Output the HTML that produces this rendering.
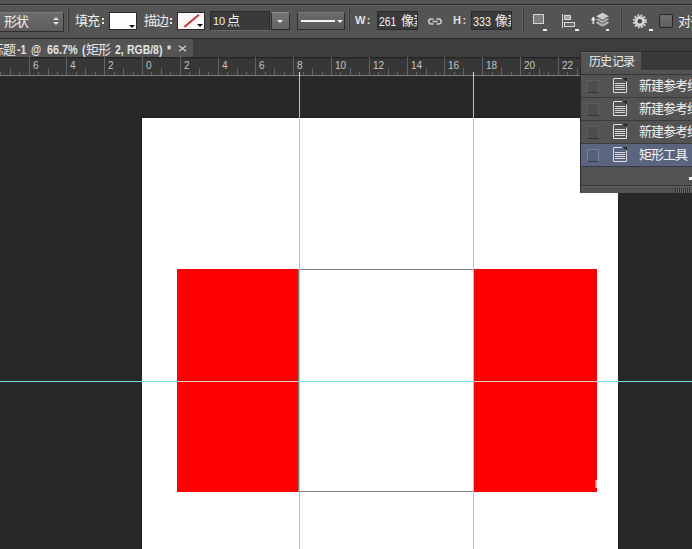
<!DOCTYPE html>
<html lang="zh-CN">
<head>
<meta charset="utf-8">
<style>
*{margin:0;padding:0;box-sizing:border-box}
html,body{width:692px;height:549px;overflow:hidden;background:#282828;font-family:"Liberation Sans",sans-serif;position:relative}
.a{position:absolute}
i,b{position:absolute;display:block;font-style:normal}
#ob{left:0;top:0;width:692px;height:39px;background:#545454}
.sep{position:absolute;top:8px;width:1px;height:25px;background:#383838}
.sepl{position:absolute;top:8px;width:1px;height:25px;background:#626262}
.t{position:absolute;color:#f0f0f0;font-size:13px;line-height:13px;white-space:nowrap;font-weight:normal}
.cj{letter-spacing:-1px}
.tri{position:absolute;width:0;height:0;border-left:3px solid transparent;border-right:3px solid transparent;border-top:3px solid #111}
#tb{left:0;top:39px;width:692px;height:18px;background:#3d3d3d}
#tab{left:0;top:39px;width:193px;height:18px;background:#545454}
.tt{position:absolute;top:44px;font-size:12px;line-height:13px;font-weight:bold;color:#e4e4e4;white-space:nowrap;transform:scaleX(0.87);transform-origin:0 0}
.cjt{font-weight:normal;transform:none;letter-spacing:-1px;font-size:13px;top:43px}
#ru{left:0;top:57px;width:692px;height:19px;background:#373737}
.tk{width:1px;background:#626262}
.tm{top:11px;height:7px}
.ts{top:15px;height:3px}
.rl{top:4px;font-size:10px;line-height:10px;color:#c4c4c4;font-weight:normal}
#doc{left:142px;top:118px;width:476px;height:431px;background:#fff;box-shadow:0 0 0 1px #222,0 0 0 2px #252525}
.red{background:#fe0000}
.gv{width:1px;background:#74e2d8}
.gh{height:1px;background:#74e2d8}
#hp{left:580px;top:51px;width:112px;height:142px;background:#535353;border-left:1px solid #2c2c2c;border-top:1px solid #2c2c2c}
.row{position:absolute;left:0;width:112px;height:23px;border-bottom:1px solid #3b3b3b}
.cb{position:absolute;left:6px;top:5px;width:12px;height:13px;background:#4d4d4d;border:1px solid #5c5c5c;border-bottom-color:#333}
.di{position:absolute;left:31px;top:3px;width:16px;height:16px}
.rt{position:absolute;left:58px;top:4px;font-size:13px;line-height:13px;color:#f4f4f4;white-space:nowrap;letter-spacing:-1px}
</style>
</head>
<body>
<!-- options bar -->
<div id="ob" class="a">
  <i style="left:0;top:4px;width:692px;height:1px;background:#2c2c2c"></i>
  <i style="left:0;top:5px;width:692px;height:1px;background:#646464"></i>
  <i style="left:0;top:38px;width:692px;height:1px;background:#2a2a2a"></i>
  <!-- shape dropdown -->
  <i style="left:-2px;top:12px;width:66px;height:20px;background:linear-gradient(#6c6c6c,#5c5c5c);border:1px solid #2e2e2e;border-top-color:#7c7c7c"></i>
  <b class="t cj" style="left:4px;top:15px">形状</b>
  <i style="left:53px;top:17px;border-left:3.5px solid transparent;border-right:3.5px solid transparent;border-bottom:3px solid #ddd"></i>
  <i style="left:53px;top:22px;border-left:3.5px solid transparent;border-right:3.5px solid transparent;border-top:3px solid #ddd"></i>
  <i class="sepl" style="left:67px"></i><i class="sep" style="left:68px"></i>
  <b class="t cj" style="left:75px;top:14px">填充</b><i style="left:102px;top:18px;width:2px;height:2px;background:#e8e8e8"></i><i style="left:102px;top:22px;width:2px;height:2px;background:#e8e8e8"></i>
  <i style="left:109px;top:12px;width:28px;height:18px;background:#fff;border:1px solid #2a2a2a"></i>
  <i class="tri" style="left:129px;top:25px"></i>
  <b class="t cj" style="left:144px;top:14px">描边</b><i style="left:170px;top:18px;width:2px;height:2px;background:#e8e8e8"></i><i style="left:170px;top:22px;width:2px;height:2px;background:#e8e8e8"></i>
  <i style="left:177px;top:12px;width:28px;height:18px;background:#fdf6f6;border:1px solid #2a2a2a;overflow:hidden">
    <i style="left:4px;top:7px;width:19px;height:1.6px;background:#c03a3a;transform:rotate(-40deg)"></i>
  </i>
  <i class="tri" style="left:197px;top:24px"></i>
  <i style="left:210px;top:11px;width:60px;height:20px;background:#3a3a3a;border:1px solid #2a2a2a;border-bottom-color:#666"></i>
  <b class="t" style="left:213px;top:16px;font-size:11px;line-height:11px">10</b><b class="t" style="left:227px;top:14px">点</b>
  <i style="left:271px;top:12px;width:19px;height:18px;background:linear-gradient(#767676,#636363);border:1px solid #2e2e2e;border-top-color:#8a8a8a"></i>
  <i style="left:277px;top:20px;border-left:3.5px solid transparent;border-right:3.5px solid transparent;border-top:3px solid #f0f0f0"></i>
  <i style="left:297px;top:12px;width:48px;height:18px;background:linear-gradient(#6a6a6a,#5a5a5a);border:1px solid #2e2e2e;border-top-color:#777"></i>
  <i style="left:301px;top:20px;width:34px;height:2px;background:#f4f4f4"></i>
  <i style="left:337px;top:20px;border-left:3px solid transparent;border-right:3px solid transparent;border-top:3px solid #eee"></i>
  <i class="sepl" style="left:348px"></i><i class="sep" style="left:349px"></i>
  <b class="t" style="left:355px;top:15px;font-size:11px;line-height:10px;font-weight:bold;color:#e0e0e0;letter-spacing:1.5px">W:</b>
  <i style="left:377px;top:11px;width:41px;height:19px;background:#3a3a3a;border:1px solid #2c2c2c;overflow:hidden"><b class="t" style="left:1px;top:4px;font-size:12px;line-height:12px;transform:scaleX(0.86);transform-origin:0 0">261</b><b class="t cj" style="left:23px;top:2px">像素</b></i>
  <svg class="a" style="left:428px;top:18px" width="14" height="7" viewBox="0 0 14 7"><path d="M5.5 1 H3.2 A2.5 2.5 0 0 0 3.2 6 H5.5 M8.5 1 H10.8 A2.5 2.5 0 0 1 10.8 6 H8.5 M4.5 3.5 H9.5" fill="none" stroke="#cfcfcf" stroke-width="1.5"/></svg>
  <b class="t" style="left:453px;top:15px;font-size:11px;line-height:10px;font-weight:bold;color:#e0e0e0;letter-spacing:1.5px">H:</b>
  <i style="left:471px;top:11px;width:41px;height:19px;background:#3a3a3a;border:1px solid #2c2c2c;overflow:hidden"><b class="t" style="left:1px;top:4px;font-size:12px;line-height:12px;transform:scaleX(0.9);transform-origin:0 0">333</b><b class="t cj" style="left:23px;top:2px">像素</b></i>
  <i class="sepl" style="left:522px"></i><i class="sep" style="left:523px"></i>
  <!-- icons -->
  <i style="left:533px;top:14px;width:11px;height:10px;background:#7e7e7e;border:1px solid #d4d4d4"></i>
  <i style="left:543px;top:29px;width:4px;height:2px;background:#eee"></i>
  <i style="left:562px;top:14px;width:1px;height:14px;background:#dadada"></i>
  <i style="left:564px;top:15px;width:7px;height:5px;background:#a0a0a0;border:1px solid #dadada"></i>
  <i style="left:564px;top:22px;width:11px;height:5px;background:#666;border:1px solid #dadada"></i>
  <i style="left:575px;top:29px;width:4px;height:2px;background:#eee"></i>
  <svg class="a" style="left:589px;top:9px" width="24" height="23" viewBox="0 0 24 23">
    <path d="M4.3 8 V15" stroke="#e0e0e0" stroke-width="1.6" fill="none"/><path d="M1.8 11.2 L4.3 7.6 L6.8 11.2 Z" fill="#e8e8e8"/>
    <path d="M7.5 13.7 L13.5 10.2 L19.5 13.7 L13.5 17.2 Z" fill="#a0a0a0" stroke="#d0d0d0" stroke-width="0.9"/>
    <path d="M7.5 10.7 L13.5 7.2 L19.5 10.7 L13.5 14.2 Z" fill="#b4b4b4" stroke="#d8d8d8" stroke-width="0.9"/>
    <path d="M7.5 10.9 L13.5 14.4 L19.5 10.9" fill="none" stroke="#3a3a3a" stroke-width="0.8"/>
    <path d="M7.5 7.7 L13.5 4.2 L19.5 7.7 L13.5 11.2 Z" fill="#cacaca" stroke="#e4e4e4" stroke-width="0.9"/>
    <path d="M7.5 7.9 L13.5 11.4 L19.5 7.9" fill="none" stroke="#333" stroke-width="0.9"/>
    <rect x="17" y="20" width="3" height="2" fill="#f0f0f0"/>
  </svg>
  <i class="sepl" style="left:620px"></i><i class="sep" style="left:621px"></i>
  <svg class="a" style="left:632px;top:13px" width="16" height="16" viewBox="0 0 16 16">
    <circle cx="7.8" cy="8.2" r="6" fill="none" stroke="#d4d4d4" stroke-width="2.2" stroke-dasharray="1.75 1.4"/>
    <circle cx="7.8" cy="8.2" r="5.2" fill="#d4d4d4"/>
    <circle cx="7.8" cy="8.2" r="2.2" fill="#454545"/>
  </svg>
  <i style="left:649px;top:29px;width:4px;height:2px;background:#eee"></i>
  <i style="left:659px;top:14px;width:14px;height:14px;background:linear-gradient(#707070,#5e5e5e);border:1px solid #262626;border-radius:2px"></i>
  <b class="t cj" style="left:678px;top:15px">对齐边缘</b>
</div>
<!-- tab bar -->
<div id="tb" class="a"></div>
<div id="tab" class="a"></div>
<b class="tt cjt" style="left:-9px">标题</b>
<b class="tt" style="left:17px">-1</b>
<b class="tt" style="left:31px">@</b>
<b class="tt" style="left:47px;transform:scaleX(0.9)">66.7%</b>
<b class="tt" style="left:82px">(</b>
<b class="tt cjt" style="left:86px">矩形</b>
<b class="tt" style="left:115px">2,</b>
<b class="tt" style="left:127px">RGB/8)</b>
<b class="tt" style="left:167px">*</b>
<svg class="a" style="left:178px;top:45px" width="9" height="7" viewBox="0 0 9 7"><path d="M1 0.8 L8 6.2 M1 6.2 L8 0.8" stroke="#d4d4d4" stroke-width="1.2"/></svg>
<!-- ruler -->
<div id="ru" class="a">
<i style="left:0;top:0;width:692px;height:1px;background:#262626"></i><i style="left:0;top:1px;width:692px;height:1px;background:#2e2e2e"></i>
<i style="left:0;top:18px;width:692px;height:1px;background:#7c7c7c"></i>
<i class="tk ts" style="left:0px"></i><i class="tk tm" style="left:10px"></i><i class="tk ts" style="left:19px"></i><i class="tk" style="left:29px;top:0;height:18px"></i><i class="tk ts" style="left:38px"></i><i class="tk tm" style="left:48px"></i><i class="tk ts" style="left:57px"></i><i class="tk" style="left:66px;top:0;height:18px"></i><i class="tk ts" style="left:76px"></i><i class="tk tm" style="left:85px"></i><i class="tk ts" style="left:95px"></i><i class="tk" style="left:104px;top:0;height:18px"></i><i class="tk ts" style="left:114px"></i><i class="tk tm" style="left:123px"></i><i class="tk ts" style="left:133px"></i><i class="tk" style="left:142px;top:0;height:18px"></i><i class="tk ts" style="left:151px"></i><i class="tk tm" style="left:161px"></i><i class="tk ts" style="left:170px"></i><i class="tk" style="left:180px;top:0;height:18px"></i><i class="tk ts" style="left:189px"></i><i class="tk tm" style="left:199px"></i><i class="tk ts" style="left:208px"></i><i class="tk" style="left:218px;top:0;height:18px"></i><i class="tk ts" style="left:227px"></i><i class="tk tm" style="left:237px"></i><i class="tk ts" style="left:246px"></i><i class="tk" style="left:255px;top:0;height:18px"></i><i class="tk ts" style="left:265px"></i><i class="tk tm" style="left:274px"></i><i class="tk ts" style="left:284px"></i><i class="tk" style="left:293px;top:0;height:18px"></i><i class="tk ts" style="left:303px"></i><i class="tk tm" style="left:312px"></i><i class="tk ts" style="left:322px"></i><i class="tk" style="left:331px;top:0;height:18px"></i><i class="tk ts" style="left:340px"></i><i class="tk tm" style="left:350px"></i><i class="tk ts" style="left:359px"></i><i class="tk" style="left:369px;top:0;height:18px"></i><i class="tk ts" style="left:378px"></i><i class="tk tm" style="left:388px"></i><i class="tk ts" style="left:397px"></i><i class="tk" style="left:407px;top:0;height:18px"></i><i class="tk ts" style="left:416px"></i><i class="tk tm" style="left:426px"></i><i class="tk ts" style="left:435px"></i><i class="tk" style="left:444px;top:0;height:18px"></i><i class="tk ts" style="left:454px"></i><i class="tk tm" style="left:463px"></i><i class="tk ts" style="left:473px"></i><i class="tk" style="left:482px;top:0;height:18px"></i><i class="tk ts" style="left:492px"></i><i class="tk tm" style="left:501px"></i><i class="tk ts" style="left:511px"></i><i class="tk" style="left:520px;top:0;height:18px"></i><i class="tk ts" style="left:529px"></i><i class="tk tm" style="left:539px"></i><i class="tk ts" style="left:548px"></i><i class="tk" style="left:558px;top:0;height:18px"></i><i class="tk ts" style="left:567px"></i><i class="tk tm" style="left:577px"></i>
<b class="rl" style="left:33px">6</b><b class="rl" style="left:70px">4</b><b class="rl" style="left:108px">2</b><b class="rl" style="left:146px">0</b><b class="rl" style="left:184px">2</b><b class="rl" style="left:222px">4</b><b class="rl" style="left:259px">6</b><b class="rl" style="left:297px">8</b><b class="rl" style="left:335px">10</b><b class="rl" style="left:373px">12</b><b class="rl" style="left:411px">14</b><b class="rl" style="left:448px">16</b><b class="rl" style="left:486px">18</b><b class="rl" style="left:524px">20</b><b class="rl" style="left:562px">22</b>

<i style="left:299px;top:15px;width:1px;height:4px;background:#9ff"></i>
<i style="left:473px;top:15px;width:1px;height:4px;background:#9ff"></i>
</div>
<!-- canvas -->
<div id="doc" class="a"></div>
<div class="a red" style="left:177px;top:269px;width:121px;height:223px"></div>
<div class="a red" style="left:473px;top:269px;width:124px;height:223px"></div>
<div class="a" style="left:298px;top:269px;width:176px;height:223px;border:1px solid #7e7e7e"></div>
<div class="a" style="left:595px;top:480px;width:1px;height:8px;background:#ff7070"></div><div class="a" style="left:596px;top:480px;width:1px;height:8px;background:#ffc0c0"></div>
<div class="a gv" style="left:299px;top:76px;height:473px"></div>
<div class="a gv" style="left:473px;top:76px;height:473px"></div>
<div class="a gh" style="left:0;top:381px;width:692px"></div>
<div class="a" style="left:177px;top:380px;width:121px;height:1px;background:#c01414"></div>
<div class="a" style="left:177px;top:381px;width:121px;height:1px;background:#f6c2ba"></div>
<div class="a" style="left:474px;top:380px;width:123px;height:1px;background:#c01414"></div>
<div class="a" style="left:474px;top:381px;width:123px;height:1px;background:#f6c2ba"></div>
<!-- history panel -->
<div id="hp" class="a">
  <i style="left:0;top:0;width:112px;height:19px;background:#3a3a3a"></i>
  <i style="left:0;top:0;width:60px;height:19px;background:#545454;border-top:1px solid #626262"></i>
  <b style="left:8px;top:4px;font-size:12px;line-height:12px;color:#eeeeee;white-space:nowrap;font-weight:normal;letter-spacing:-0.7px">历史记录</b>
  <i style="left:60px;top:18px;width:52px;height:1px;background:#5a5a5a"></i>
  <i style="left:0;top:22px;width:112px;height:1px;background:#353535"></i>
  <div class="row" style="top:23px"><i class="cb"></i><svg class="di" width="16" height="16" viewBox="0 0 16 16"><path d="M1.5 1 V14.5 H14.5 V3.5 M1.5 0.5 H10.5" fill="none" stroke="#dedede" stroke-width="1"/><path d="M10 0 L15 0 L15 3 Z" fill="#222"/><path d="M3 5.5 H13 M3 7.5 H13 M3 9.5 H13 M3 11.5 H13" stroke="#d8d8d8" stroke-width="1"/></svg><b class="rt" style="font-weight:normal">新建参考线</b></div>
  <div class="row" style="top:46px"><i class="cb"></i><svg class="di" width="16" height="16" viewBox="0 0 16 16"><path d="M1.5 1 V14.5 H14.5 V3.5 M1.5 0.5 H10.5" fill="none" stroke="#dedede" stroke-width="1"/><path d="M10 0 L15 0 L15 3 Z" fill="#222"/><path d="M3 5.5 H13 M3 7.5 H13 M3 9.5 H13 M3 11.5 H13" stroke="#d8d8d8" stroke-width="1"/></svg><b class="rt" style="font-weight:normal">新建参考线</b></div>
  <div class="row" style="top:69px"><i class="cb"></i><svg class="di" width="16" height="16" viewBox="0 0 16 16"><path d="M1.5 1 V14.5 H14.5 V3.5 M1.5 0.5 H10.5" fill="none" stroke="#dedede" stroke-width="1"/><path d="M10 0 L15 0 L15 3 Z" fill="#222"/><path d="M3 5.5 H13 M3 7.5 H13 M3 9.5 H13 M3 11.5 H13" stroke="#d8d8d8" stroke-width="1"/></svg><b class="rt" style="font-weight:normal">新建参考线</b></div>
  <div class="row" style="top:92px;background:#5b6580;border-bottom-color:#363a44"><i class="cb" style="background:#56607a;border-color:#7882a0;border-bottom-color:#3a3f4c"></i><svg class="di" width="16" height="16" viewBox="0 0 16 16"><path d="M1.5 1 V14.5 H14.5 V3.5 M1.5 0.5 H10.5" fill="none" stroke="#dedede" stroke-width="1"/><path d="M10 0 L15 0 L15 3 Z" fill="#222"/><path d="M3 5.5 H13 M3 7.5 H13 M3 9.5 H13 M3 11.5 H13" stroke="#d8d8d8" stroke-width="1"/></svg><b class="rt" style="font-weight:normal">矩形工具</b></div>
  <i style="left:0;top:133px;width:112px;height:1px;background:#333"></i>
  <i style="left:0;top:134px;width:112px;height:1px;background:#616161"></i>
  <i style="left:108px;top:125px;width:4px;height:3px;background:#eee"></i>
  <i style="left:94px;top:136px;width:16px;height:5px;background:repeating-linear-gradient(90deg,#2e2e2e 0 1px,#6a6a6a 1px 2px)"></i>
</div>
</body></html>
